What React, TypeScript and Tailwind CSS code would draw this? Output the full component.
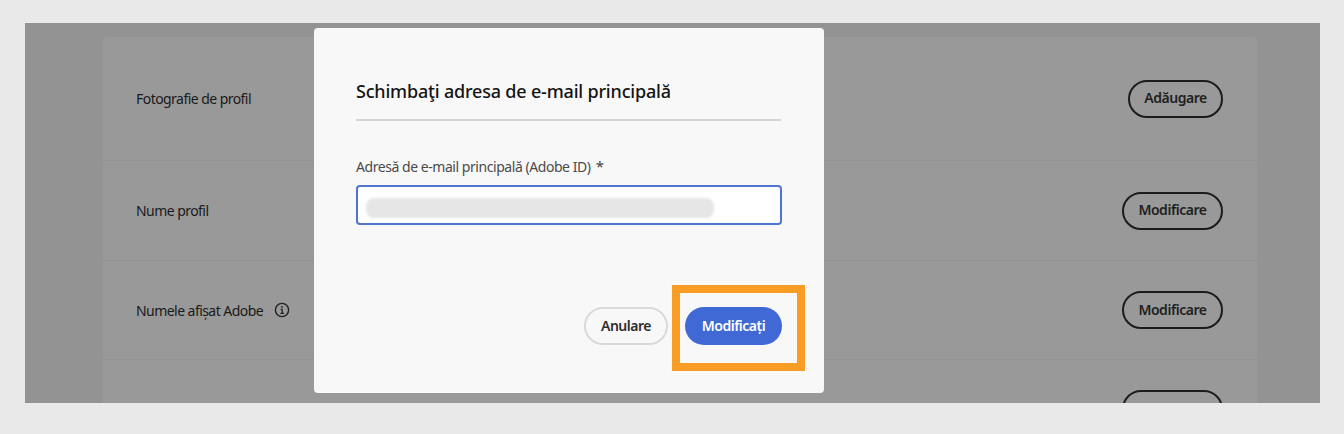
const rows = [
    { label: 'Fotografie de profil', action: 'Adăugare', height: 'h-[124px]', btn: 'w-[95px]' },
    { label: 'Nume profil', action: 'Modificare', height: 'h-[100px]', btn: 'w-[101px]' },
    { label: 'Numele afișat Adobe', action: 'Modificare', height: 'h-[99px]', btn: 'w-[101px]', info: true },
    { label: '', action: 'Modificare', height: 'h-[99px]', btn: 'w-[101px]' },
];

function InfoIcon() {
    return (
        <svg viewBox="0 0 16 16" className="h-[16px] w-[16px] text-[#222222]" fill="none" stroke="currentColor">
            <circle cx="8" cy="8" r="6.6" strokeWidth="1.4" />
            <path d="M6.6 7.3H8.2V11.4M6.4 11.4H10" strokeWidth="1.3" />
            <circle cx="8" cy="4.9" r="0.9" fill="currentColor" stroke="none" />
        </svg>
    );
}

export default function App() {
    return (
        <div className="h-[434px] w-[1344px] bg-[#e9e9e9] px-[25px] pt-[23px] font-['Noto_Sans',sans-serif]">
            <div className="relative h-[380px] w-[1295px] overflow-hidden bg-[#939393] px-[77px] pt-[13px]">
                <div className="w-[1156px] rounded-t-[4px] border-x border-t border-[#949494] bg-[#999999]">
                    {rows.map((row, i) => (
                        <div key={i} className={`flex items-center justify-between border-b border-[#929292] pl-[33px] pr-[34px] ${row.height}`}>
                            <div className="flex items-center gap-[11px] text-[14px] tracking-[-0.55px] text-[#1a1a1a]">
                                <span>{row.label}</span>
                                {row.info && <InfoIcon />}
                            </div>
                            <button className={`flex h-[38px] items-center justify-center rounded-full border-2 border-[#1c1c1c] pb-[2px] text-[14px] font-semibold tracking-[-0.45px] text-[#1f1f1f] ${row.btn}`}>
                                {row.action}
                            </button>
                        </div>
                    ))}
                </div>

                <div className="absolute left-[289px] top-[5px] h-[365px] w-[510px] rounded-[4px] bg-[#f8f8f8] px-[42px] pt-[50px]">
                    <h2 className="text-[18px] font-medium leading-[26px] tracking-[-0.19px] text-[#141414]">Schimbaţi adresa de e-mail principală</h2>
                    <div className="mt-[15px] h-[2px] w-[425px] bg-[#d5d5d5]" />
                    <label className="mt-[35px] block text-[14px] leading-[20px] tracking-[-0.45px] text-[#4b4b4b]">
                        Adresă de e-mail principală (Adobe ID) <span className="ml-[2px] text-[15px] text-[#444444]">*</span>
                    </label>
                    <div className="mt-[8px] flex h-[40px] w-[426px] items-center rounded-[4px] border-2 border-[#4f75d0] bg-white pl-[8px]">
                        <div className="mt-[5px] h-[20px] w-[348px] rounded-[8px] bg-[#e6e6e6] blur-[1px]" />
                    </div>
                    <div className="mt-[82px] flex w-[426px] justify-end gap-[17px]">
                        <button className="flex h-[38px] w-[84px] items-center justify-center rounded-full border-2 border-[#d9d9d9] pb-[2px] text-[14px] font-semibold tracking-[-0.5px] text-[#2e2e2e]">
                            Anulare
                        </button>
                        <button className="flex h-[38px] w-[97px] items-center justify-center rounded-full bg-[#4069d6] pb-[2px] text-[14px] font-semibold tracking-[-0.5px] text-white">
                            Modificați
                        </button>
                    </div>
                </div>

                <div className="absolute left-[647px] top-[262px] h-[86px] w-[133px] border-[8px] border-[#f99d27]" />
            </div>
        </div>
    );
}
